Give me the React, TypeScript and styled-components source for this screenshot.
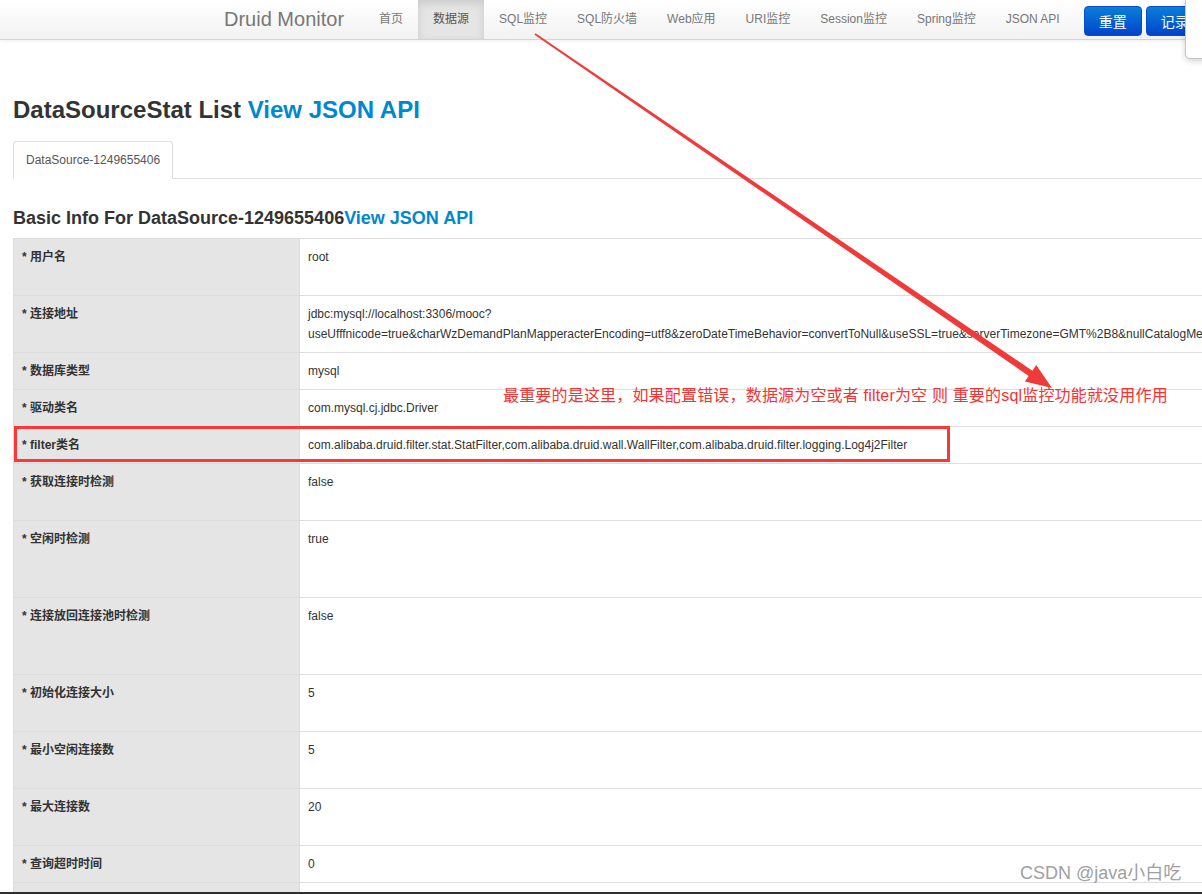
import React from 'react';
import styled, { createGlobalStyle } from 'styled-components';

const GlobalStyle = createGlobalStyle`
  html, body {
    margin: 0;
    padding: 0;
    overflow: hidden;
    background: #fff;
  }
  body {
    font-family: "Liberation Sans", Arial, "Noto Sans CJK SC", sans-serif;
    font-size: 12px;
    line-height: 20px;
    color: #333;
  }
`;

const Page = styled.div`
  position: relative;
  min-height: 894px;
`;

// top navbar
const NavBar = styled.div`
  height: 39px;
  display: flex;
  align-items: stretch;
  padding-left: 204px;
  white-space: nowrap;
  background: linear-gradient(#ffffff, #f2f2f2);
  border-bottom: 1px solid #d4d4d4;
  box-shadow: 0 1px 4px rgba(0, 0, 0, 0.065);
`;

const Brand = styled.div`
  padding: 0 20px;
  font-size: 20px;
  line-height: 39px;
  color: #777;
`;

const NavItem = styled.div<{ $active?: boolean }>`
  padding: 0 15px;
  line-height: 39px;
  font-size: 12px;
  color: ${p => (p.$active ? '#555' : '#777')};
  background: ${p => (p.$active ? '#e5e5e5' : 'transparent')};
  box-shadow: ${p => (p.$active ? 'inset 0 3px 8px rgba(0, 0, 0, 0.125)' : 'none')};
`;

const NavButtons = styled.div`
  display: flex;
  gap: 4px;
  margin-left: 9px;
  padding-top: 6px;
`;

const PrimaryButton = styled.button`
  height: 30px;
  padding: 0 14px;
  font-family: inherit;
  font-size: 14px;
  color: #fff;
  background: linear-gradient(#0a7fd8, #0044cc);
  border: 1px solid #0a4bc4;
  border-radius: 4px;
`;

const CornerPopup = styled.div`
  position: absolute;
  top: -1px;
  left: 1185px;
  width: 40px;
  height: 58px;
  background: #fff;
  border: 1px solid #c4c4c4;
  border-radius: 0 0 0 5px;
  box-shadow: 0 2px 6px rgba(0, 0, 0, 0.18);
`;

// content
const Main = styled.div`
  width: 1700px;
  padding: 50px 13px 0;
`;

const Title = styled.h2`
  margin: 0;
  font-size: 24px;
  line-height: 40px;
  font-weight: bold;
  color: #333;
  white-space: nowrap;
`;

const SectionTitle = styled.h3`
  margin: 19px 0 0;
  font-size: 18px;
  line-height: 40px;
  font-weight: bold;
  color: #333;
  white-space: nowrap;
`;

const ApiLink = styled.a`
  color: #0088cc;
  text-decoration: none;
`;

const Tabs = styled.ul`
  display: flex;
  margin: 11px 0 0;
  padding: 0;
  list-style: none;
  border-bottom: 1px solid #ddd;
`;

const Tab = styled.li`
  margin-bottom: -1px;
  padding: 8px 12px;
  line-height: 20px;
  color: #555;
  background: #fff;
  border: 1px solid #ddd;
  border-bottom-color: transparent;
  border-radius: 4px 4px 0 0;
`;

const InfoTable = styled.table`
  width: 100%;
  table-layout: fixed;
  border-collapse: collapse;
`;

const LabelCell = styled.td<{ $lines: number }>`
  width: 269px;
  height: ${p => p.$lines * 20}px;
  padding: 8px;
  vertical-align: top;
  font-weight: bold;
  background: #e5e5e5;
  border: 1px solid #ddd;
`;

const ValueCell = styled.td`
  padding: 8px;
  vertical-align: top;
  white-space: nowrap;
  overflow: hidden;
  border: 1px solid #ddd;
`;

// annotations drawn over the page
const Highlight = styled.div`
  position: absolute;
  left: 14px;
  top: 426px;
  width: 936px;
  height: 36px;
  box-sizing: border-box;
  border: 3px solid #fb3838;
`;

const Note = styled.div`
  position: absolute;
  left: 503px;
  top: 386px;
  font-size: 16px;
  line-height: 20px;
  letter-spacing: 0.18px;
  color: #f53232;
  white-space: nowrap;
`;

const ArrowLayer = styled.svg`
  position: absolute;
  top: 0;
  left: 0;
  pointer-events: none;
`;

const Watermark = styled.div`
  position: absolute;
  left: 1020px;
  top: 862px;
  font-size: 18px;
  line-height: 22px;
  color: #a0a0a0;
  text-shadow: 0 0 1px #fff;
  white-space: nowrap;
`;

const BottomEdge = styled.div`
  position: fixed;
  left: 0;
  right: 0;
  bottom: 0;
  height: 2px;
  background: #2e2e2e;
`;

const navItems = ['首页', '数据源', 'SQL监控', 'SQL防火墙', 'Web应用', 'URI监控', 'Session监控', 'Spring监控', 'JSON API'];

const rows: { label: string; value: string[]; lines: number }[] = [
  { label: '用户名', value: ['root'], lines: 2 },
  {
    label: '连接地址',
    value: [
      'jdbc:mysql://localhost:3306/mooc?',
      'useUfffnicode=true&charWzDemandPlanMapperacterEncoding=utf8&zeroDateTimeBehavior=convertToNull&useSSL=true&serverTimezone=GMT%2B8&nullCatalogMe',
    ],
    lines: 2,
  },
  { label: '数据库类型', value: ['mysql'], lines: 1 },
  { label: '驱动类名', value: ['com.mysql.cj.jdbc.Driver'], lines: 1 },
  {
    label: 'filter类名',
    value: ['com.alibaba.druid.filter.stat.StatFilter,com.alibaba.druid.wall.WallFilter,com.alibaba.druid.filter.logging.Log4j2Filter'],
    lines: 1,
  },
  { label: '获取连接时检测', value: ['false'], lines: 2 },
  { label: '空闲时检测', value: ['true'], lines: 3 },
  { label: '连接放回连接池时检测', value: ['false'], lines: 3 },
  { label: '初始化连接大小', value: ['5'], lines: 2 },
  { label: '最小空闲连接数', value: ['5'], lines: 2 },
  { label: '最大连接数', value: ['20'], lines: 2 },
  { label: '查询超时时间', value: ['0'], lines: 1 },
  { label: '', value: [], lines: 2 },
];

// tapered red arrow from the nav bar down to the note
const arrowPoints = (() => {
  const sx = 535, sy = 34, tx = 1052, ty = 388;
  const dx = tx - sx, dy = ty - sy;
  const len = Math.hypot(dx, dy);
  const ux = dx / len, uy = dy / len;
  const px = -uy, py = ux;
  const headLen = 26, headHalf = 10, startHalf = 0.8, endHalf = 3.2;
  const bx = tx - ux * headLen, by = ty - uy * headLen;
  const pts = [
    [sx + px * startHalf, sy + py * startHalf],
    [bx + px * endHalf, by + py * endHalf],
    [bx + px * headHalf, by + py * headHalf],
    [tx, ty],
    [bx - px * headHalf, by - py * headHalf],
    [bx - px * endHalf, by - py * endHalf],
    [sx - px * startHalf, sy - py * startHalf],
  ];
  return pts.map(p => p.map(n => n.toFixed(1)).join(',')).join(' ');
})();

function App() {
  return (
    <Page>
      <GlobalStyle />
      <NavBar>
        <Brand>Druid Monitor</Brand>
        {navItems.map(item => (
          <NavItem key={item} $active={item === '数据源'}>{item}</NavItem>
        ))}
        <NavButtons>
          <PrimaryButton>重置</PrimaryButton>
          <PrimaryButton>记录</PrimaryButton>
        </NavButtons>
      </NavBar>
      <CornerPopup />

      <Main>
        <Title>
          DataSourceStat List <ApiLink href="#">View JSON API</ApiLink>
        </Title>
        <Tabs>
          <Tab>DataSource-1249655406</Tab>
        </Tabs>
        <SectionTitle>
          Basic Info For DataSource-1249655406<ApiLink href="#">View JSON API</ApiLink>
        </SectionTitle>
        <InfoTable>
          <tbody>
            {rows.map((row, r) => (
              <tr key={r}>
                <LabelCell $lines={row.lines}>{row.label && `* ${row.label}`}</LabelCell>
                <ValueCell>
                  {row.value.map((line, i) => (
                    <React.Fragment key={i}>
                      {i > 0 && <br />}
                      {line}
                    </React.Fragment>
                  ))}
                </ValueCell>
              </tr>
            ))}
          </tbody>
        </InfoTable>
      </Main>

      <Highlight />
      <Note>最重要的是这里，如果配置错误，数据源为空或者 filter为空 则 重要的sql监控功能就没用作用</Note>
      <ArrowLayer width="1202" height="894" viewBox="0 0 1202 894">
        <polygon points={arrowPoints} fill="#f03a3a" />
      </ArrowLayer>
      <Watermark>CSDN @java小白吃</Watermark>
      <BottomEdge />
    </Page>
  );
}

export default App;
